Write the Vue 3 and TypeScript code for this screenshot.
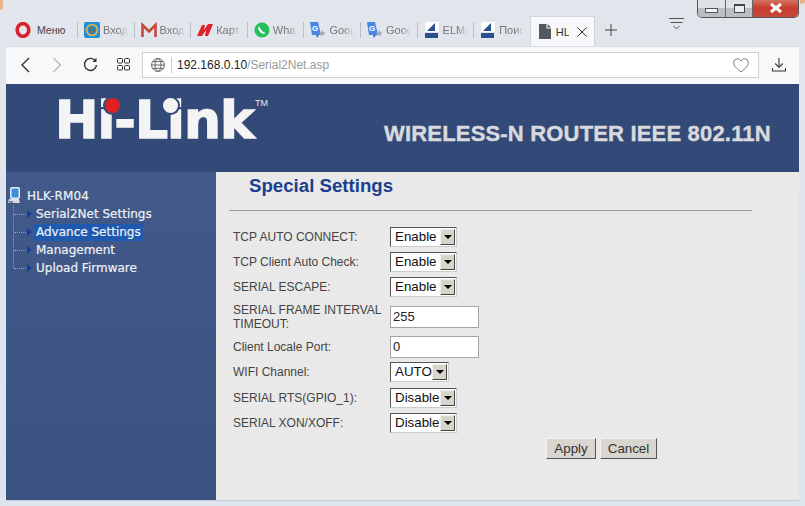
<script setup lang="ts">
interface Tab { label: string; icon: string }
const tabs: Tab[] = [
  { label: 'Вход', icon: 'at' },
  { label: 'Вход', icon: 'gmail' },
  { label: 'Карт', icon: 'map' },
  { label: 'Wha', icon: 'wa' },
  { label: 'Goog', icon: 'gt' },
  { label: 'Goog', icon: 'gt' },
  { label: 'ELMI', icon: 'elm' },
  { label: 'Поис', icon: 'elm' },
]
const menu = ['Serial2Net Settings', 'Advance Settings', 'Management', 'Upload Firmware']
interface Row { label: string; kind: 'select' | 'input'; value: string; cls?: string }
const rows: Row[] = [
  { label: 'TCP AUTO CONNECT:', kind: 'select', value: 'Enable' },
  { label: 'TCP Client Auto Check:', kind: 'select', value: 'Enable' },
  { label: 'SERIAL ESCAPE:', kind: 'select', value: 'Enable' },
  { label: 'SERIAL FRAME INTERVAL TIMEOUT:', kind: 'input', value: '255', cls: 'tall' },
  { label: 'Client Locale Port:', kind: 'input', value: '0' },
  { label: 'WIFI Channel:', kind: 'select', value: 'AUTO', cls: 'auto' },
  { label: 'SERIAL RTS(GPIO_1):', kind: 'select', value: 'Disable', cls: 'rts' },
  { label: 'SERIAL XON/XOFF:', kind: 'select', value: 'Disable' },
]
</script>

<template>
  <div class="window">
    <span class="corner corner-l"></span>
    <span class="corner corner-r"></span>
    <div class="winctl">
      <div class="wc wc-min"><span></span></div>
      <div class="wc wc-max"><span></span></div>
      <div class="wc wc-close">
        <svg width="14" height="10" viewBox="0 0 14 10"><path d="M2 1 L12 9 M12 1 L2 9" stroke="#fff" stroke-width="3" /></svg>
      </div>
    </div>

    <div class="tabstrip">
      <div class="opera">
        <svg width="16" height="16" viewBox="0 0 16 16"><ellipse cx="8" cy="8" rx="5.8" ry="6.3" fill="none" stroke="#d8212c" stroke-width="3.6" /></svg>
        <span>Меню</span>
      </div>
      <div v-for="(t, i) in tabs" :key="i" class="tab">
        <svg class="fav" width="16" height="16" viewBox="0 0 16 16">
          <template v-if="t.icon === 'at'">
            <rect width="16" height="16" rx="2" fill="#1c8fd6" />
            <circle cx="8" cy="8" r="5.4" fill="none" stroke="#e0b04a" stroke-width="1.8" />
            <circle cx="8" cy="8" r="2.2" fill="none" stroke="#7d6a40" stroke-width="1.3" />
          </template>
          <template v-else-if="t.icon === 'gmail'">
            <path d="M1.5 15 V3 L8 9.5 L14.5 3 V15" fill="none" stroke="#c9473c" stroke-width="2.6" />
          </template>
          <template v-else-if="t.icon === 'map'">
            <path d="M0 14 L5 3 H8 L7 8 L11 2 H16 L11 14 H8 L9 8 L5 14 Z" fill="#e2202c" />
          </template>
          <template v-else-if="t.icon === 'wa'">
            <circle cx="8" cy="8" r="7.5" fill="#25c05a" />
            <path d="M5 4.5 L7 7.5 Q8 9.5 11.5 11 L10 12 Q5 11 4 6 Z" fill="#fff" />
          </template>
          <template v-else-if="t.icon === 'gt'">
            <path d="M0 0 H8 L11 13 H2 Z" fill="#4a86e8" />
            <path d="M6 13 H9 L7 16 Z" fill="#3a6fc8" />
            <text x="2" y="9" font-size="8" font-weight="700" font-family="Liberation Sans" fill="#fff">G</text>
            <path d="M12 8 L13.2 10 L15.5 10.3 L13.8 11.8 L14.2 14 L12 13 L10 14 L10.5 11.8 L9 10.3 L11 10 Z" fill="#a8adb5" />
          </template>
          <template v-else>
            <path d="M1 0 H15 V10 H1 Z" fill="#fff" />
            <path d="M11 1 L3 9 H11 Z" fill="#2a4f8f" />
            <rect x="1" y="11" width="13" height="5" fill="#2a4f8f" />
          </template>
        </svg>
        <span class="tab-label">{{ t.label }}</span>
      </div>
      <div class="tab-active">
        <svg width="12" height="15" viewBox="0 0 12 15"><path d="M0 0 H7.5 V4.5 H12 V15 H0 Z M8.6 0 L12 3.4 H8.6 Z" fill="#55595f" /></svg>
        <span class="active-label">HL</span>
        <svg class="x" width="10" height="10" viewBox="0 0 10 10"><path d="M.5 .5 L9.5 9.5 M9.5 .5 L.5 9.5" stroke="#333" stroke-width="1" /></svg>
      </div>
      <svg class="plus" width="12" height="12" viewBox="0 0 12 12"><path d="M6 0 V12 M0 6 H12" stroke="#444" stroke-width="1" /></svg>
      <svg class="menu-ic" width="15" height="14" viewBox="0 0 15 14"><path d="M0 .5 H15 M1.5 4.5 H13.5" stroke="#555" /><path d="M4.5 8 L7.5 11 L10.5 8" stroke="#555" fill="none" /></svg>
    </div>

    <div class="toolbar">
      <svg class="back" width="10" height="16" viewBox="0 0 10 16"><path d="M8 1 L1 8 L8 15" fill="none" stroke="#333" stroke-width="1.4" /></svg>
      <svg class="fwd" width="10" height="16" viewBox="0 0 10 16"><path d="M1.5 1 L8.5 8 L1.5 15" fill="none" stroke="#b5b5b5" stroke-width="1.2" /></svg>
      <svg class="reload" width="15" height="15" viewBox="0 0 15 15"><path d="M12.6 4.2 A6 6 0 1 0 13.5 8" fill="none" stroke="#333" stroke-width="1.4" /><path d="M13.5 .8 V5 H9.3" fill="#333" /></svg>
      <svg class="grid" width="13" height="13" viewBox="0 0 13 13"><g fill="none" stroke="#333"><rect x=".5" y=".5" width="5" height="4.5" rx="1" /><rect x="7.5" y=".5" width="5" height="4.5" rx="1" /><rect x=".5" y="7.5" width="5" height="4.5" rx="1" /><rect x="7.5" y="7.5" width="5" height="4.5" rx="1" /></g></svg>
      <div class="urlbar">
        <svg width="14" height="14" viewBox="0 0 14 14"><g fill="none" stroke="#666"><circle cx="7" cy="7" r="6.4" /><ellipse cx="7" cy="7" rx="3" ry="6.4" /><path d="M.6 7 H13.4 M1.6 3.6 H12.4 M1.6 10.4 H12.4" /></g></svg>
        <span class="sep"></span>
        <span class="url"><b>192.168.0.10</b><i>/Serial2Net.asp</i></span>
        <svg class="heart" width="16" height="15" viewBox="0 0 16 15"><path d="M8 14 C3 10 .7 7.6 .7 4.8 C.7 2.4 2.5 .8 4.5 .8 C6 .8 7.3 1.6 8 3 C8.7 1.6 10 .8 11.5 .8 C13.5 .8 15.3 2.4 15.3 4.8 C15.3 7.6 13 10 8 14 Z" fill="none" stroke="#777" /></svg>
      </div>
      <svg class="dl" width="14" height="14" viewBox="0 0 14 14"><path d="M7 0 V9 M3.2 5.5 L7 9.3 L10.8 5.5 M.5 10 V13 H13.5 V10" fill="none" stroke="#333" stroke-width="1.1" /></svg>
    </div>

    <div class="banner">
      <div class="logo">
        <span class="logo-text">Hi-Link</span>
        <span class="dot"></span>
        <span class="dot dot-w"></span>
        <span class="tm">TM</span>
      </div>
      <div class="slogan">WIRELESS-N ROUTER IEEE 802.11N</div>
    </div>

    <div class="main">
      <aside class="side">
        <div class="root">
          <svg width="13" height="17" viewBox="0 0 13 17"><rect x="2" y="0" width="10" height="12" rx="2" fill="#e4eef8" /><rect x="3.5" y="1.5" width="7" height="9" rx="1" fill="#3f8fd8" /><path d="M1 12 H11 L12 16 H0 Z" fill="#d9dde6" /><rect x="1" y="14" width="4" height="2" fill="#7f8aa0" /></svg>
          <span>HLK-RM04</span>
        </div>
        <ul class="tree">
          <li v-for="(m, i) in menu" :key="m" :class="{ sel: i === 1 }">
            <span class="arrow"></span>
            <span class="link">{{ m }}</span>
          </li>
        </ul>
      </aside>

      <section class="content">
        <h1>Special Settings</h1>
        <hr />
        <div class="form">
          <div v-for="r in rows" :key="r.label" class="row" :class="r.cls">
            <label>{{ r.label }}</label>
            <div v-if="r.kind === 'select'" class="select">
              <span class="val">{{ r.value }}</span>
              <span class="drop"><i></i></span>
            </div>
            <div v-else class="input">{{ r.value }}</div>
          </div>
          <div class="buttons">
            <button>Apply</button>
            <button>Cancel</button>
          </div>
        </div>
      </section>
    </div>
  </div>
</template>

<style>
html, body { margin: 0; padding: 0; background: #dfe5ee; }
</style>

<style scoped>
.window {
  width: 805px; height: 506px; position: relative; overflow: hidden;
  background: linear-gradient(#e2e6ec, #dde4ee);
  font-family: "Liberation Sans", Arial, sans-serif;
  display: flex; flex-direction: column;
}
.corner { position: absolute; top: 0; width: 3px; background: #e8b48a; border-radius: 0 0 3px 0; }
.corner-l { left: 0; height: 10px; }
.corner-r { left: 800px; height: 4px; width: 5px; }
.winctl {
  position: absolute; top: -1px; left: 697px; width: 102px; height: 19px;
  display: flex; border: 1px solid #555; border-top: 0; border-radius: 0 0 5px 5px; overflow: hidden; box-sizing: border-box;
}
.wc { display: flex; align-items: center; justify-content: center; border-right: 1px solid #666; background: linear-gradient(#dfe3e8 50%, #b9bfc2 50%); box-sizing: border-box; }
.wc-min { width: 28px; }
.wc-min span { width: 11px; height: 3px; border: 1px solid #555; background: #f4f4f4; margin-top: 5px; }
.wc-max { width: 27px; }
.wc-max span { width: 9px; height: 6px; border: 1px solid #444; border-top-width: 2px; background: #eee; }
.wc-close { flex: 1; border-right: 0; background: linear-gradient(#d77a6a, #c83c30 50%, #c64a38); }
.tabstrip {
  height: 46px; box-sizing: border-box; padding: 14px 0 0 15px; display: flex; align-items: center; flex: none; position: relative;
}
.opera { display: flex; align-items: center; width: 62px; font-size: 10.5px; color: #444; gap: 6px; }
.tab {
  width: 56.6px; height: 16px; display: flex; align-items: center; gap: 3px; box-sizing: border-box; padding-left: 6px;
  font-size: 11px; color: #777; overflow: hidden; white-space: nowrap; flex: none;
  border-left: 1px solid #b9bec4;
}
.fav { flex: none; }
.tab-label { flex: none; width: 25px; overflow: hidden; -webkit-mask-image: linear-gradient(to right, #000 60%, transparent); mask-image: linear-gradient(to right, #000 60%, transparent); }
.tab-active {
  width: 65px; height: 30px; background: #f7f8fa; display: flex; align-items: center; padding: 0 0 0 8px; box-sizing: border-box; flex: none;
  font-size: 11px; color: #333; gap: 5px; align-self: flex-end; border: 1px solid #d2d6dc; border-bottom: 0;
}
.active-label { width: 13px; overflow: hidden; }
.x { margin-left: 3px; }
.plus { margin-left: 10px; }
.menu-ic { position: absolute; left: 669px; top: 18px; }
.toolbar {
  height: 38px; margin: 0 6px; padding-bottom: 2px; background: #f7f8fa; display: flex; align-items: center; flex: none; position: relative;
  border-top: 1px solid #d8dce2; box-sizing: border-box;
}
.back { margin-left: 15px; }
.fwd { margin-left: 21px; }
.reload { margin-left: 21px; }
.grid { margin-left: 19px; }
.urlbar {
  width: 617px; height: 26px; background: #fff; border: 1px solid #cdd1d6; box-sizing: border-box; display: flex; align-items: center; padding-left: 8px; position: relative; margin-left: 12px;
}
.sep { width: 1px; height: 16px; background: #c8c8c8; margin: 0 5px 0 6px; }
.url { font-size: 12px; white-space: nowrap; }
.url b { font-weight: 400; color: #222; }
.url i { font-style: normal; color: #9a9a9a; }
.heart { position: absolute; right: 9px; top: 5px; }
.dl { margin-left: 13px; }
.banner { margin: 0 6px; height: 88px; background: #334a78; flex: none; position: relative; }
.logo { position: absolute; left: 51px; top: 1px; width: 230px; height: 70px; }
.logo-text {
  position: absolute; left: -2px; top: 0; font-family: "DejaVu Sans", sans-serif; font-weight: 700; font-size: 52px; line-height: 70px; color: #f4f4f4; letter-spacing: -1px; -webkit-text-stroke: 1.4px #f4f4f4;
}
.dot { position: absolute; left: 48px; top: 13px; width: 15px; height: 15px; border-radius: 50%; background: #e02020; box-shadow: 0 0 0 2px #334a78; }
.dot-w { left: 106px; background: #f4f4f4; }
.tm { position: absolute; left: 198px; top: 13px; font-size: 9px; color: #e8e8e8; }
.slogan {
  position: absolute; left: 378px; top: 37px; font-size: 22px; font-weight: 700; color: #d8dadd; white-space: nowrap; letter-spacing: .18px; -webkit-text-stroke: .4px #d8dadd;
}
.main { flex: none; height: 329px; margin: 0 6px; display: flex; border-bottom: 1px solid #c6ccd8; box-sizing: border-box; }
.side { width: 210px; background: linear-gradient(#425a8a, #39527f); flex: none; color: #eef0f5; font-family: "DejaVu Sans", sans-serif; font-size: 12px; font-weight: 400; box-sizing: border-box; padding-top: 15px; -webkit-text-stroke: .2px #eef0f5; }
.root { display: flex; align-items: center; gap: 6px; padding-left: 2px; height: 17px; letter-spacing: .2px; }
.tree { list-style: none; margin: 1px 0 0 7px; padding: 0; border-left: 1px dotted #8d9dbd; height: 63px; }
.tree li { height: 18px; display: flex; align-items: center; position: relative; padding-left: 7px; }
.tree li::before { content: ""; position: absolute; left: 0; top: 9px; width: 12px; border-top: 1px dotted #8d9dbd; }
.arrow { width: 0; height: 0; border-left: 5px solid #14409a; border-top: 4px solid transparent; border-bottom: 4px solid transparent; margin-left: 6px; margin-right: 2px; position: relative; }
.link { padding: 0 2px; line-height: 17px; white-space: nowrap; }
.sel .link { background: #1f5ab0; }
.content { flex: 1; background: #e9e9e9; position: relative; box-sizing: border-box; }
h1 { margin: 0; position: absolute; left: 33px; top: 3px; font-size: 18.67px; line-height: 22px; font-weight: 700; color: #1b3f8e; }
hr { position: absolute; left: 13px; top: 38px; width: 523px; margin: 0; border: 0; border-top: 1px solid #9a9a9a; }
.form { position: absolute; left: 17px; top: 54px; width: 424px; display: flex; flex-direction: column; gap: 3px; }
.row { display: flex; align-items: center; height: 22px; font-size: 12px; color: #444; }
.row.tall { height: 32px; }
.row.rts { margin-top: 1px; }
.row label { width: 157px; line-height: 14px; flex: none; }
.select { display: flex; align-items: center; height: 20px; width: 67px; box-sizing: border-box; background: #fff; border: 1px solid #555; border-right-color: #ccc; border-bottom-color: #ccc; font-size: 13.33px; color: #111; }
.auto .select { width: 59px; }
.val { flex: 1; padding-left: 4px; line-height: 18px; white-space: nowrap; }
.drop { width: 15px; height: 16px; margin-right: 1px; flex: none; background: #d8d4cc; border: 1px solid; border-color: #f2f0ea #444 #444 #f2f0ea; box-sizing: border-box; display: flex; align-items: center; justify-content: center; }
.drop i { width: 0; height: 0; border-left: 4px solid transparent; border-right: 4px solid transparent; border-top: 4px solid #000; }
.input { width: 89px; height: 22px; box-sizing: border-box; background: #fff; border: 1px solid #a5a5a5; font-size: 13px; color: #222; padding-left: 2px; line-height: 20px; }
.buttons { display: flex; justify-content: flex-end; gap: 4px; margin-top: 1px; }
button { height: 21px; padding: 0; font: 13.33px "Liberation Sans", Arial, sans-serif; color: #333; background: #d8d6ce; border: 1px solid; border-color: #f4f4f0 #555 #555 #f4f4f0; box-sizing: border-box; }
button:first-child { width: 50px; }
button:last-child { width: 57px; }
</style>
